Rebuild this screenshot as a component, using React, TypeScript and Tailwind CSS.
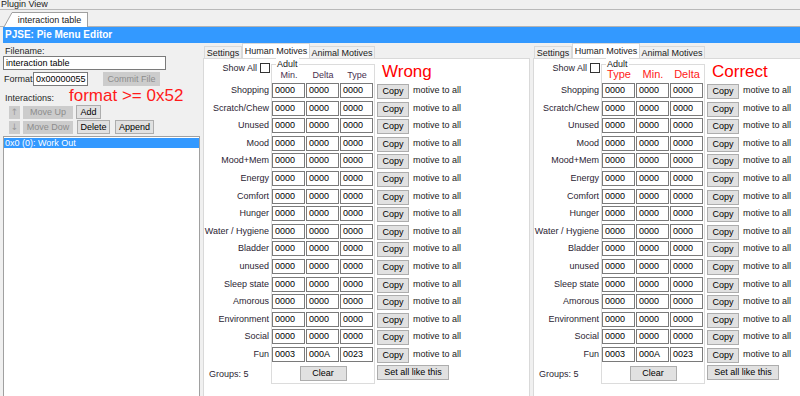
import React from "react";

type Motive = { label: string; vals: string[] };

const labels = [
  "Shopping",
  "Scratch/Chew",
  "Unused",
  "Mood",
  "Mood+Mem",
  "Energy",
  "Comfort",
  "Hunger",
  "Water / Hygiene",
  "Bladder",
  "unused",
  "Sleep state",
  "Amorous",
  "Environment",
  "Social",
];

const motives: Motive[] = [
  ...labels.map((l) => ({ label: l, vals: ["0000", "0000", "0000"] })),
  { label: "Fun", vals: ["0003", "000A", "0023"] },
];

function Btn({
  children,
  className = "",
}: {
  children: React.ReactNode;
  className?: string;
}) {
  return (
    <button
      className={`flex items-center justify-center bg-[#e1e1e1] border border-[#adadad] text-black leading-none ${className}`}
    >
      {children}
    </button>
  );
}

function Disabled({
  children,
  className = "",
}: {
  children: React.ReactNode;
  className?: string;
}) {
  return (
    <div
      className={`flex items-center justify-center bg-[#cccccc] text-[#8d8d8d] leading-none ${className}`}
    >
      {children}
    </div>
  );
}

function MotivePanel({
  headers,
  correct,
}: {
  headers: string[];
  correct?: boolean;
}) {
  return (
    <div className="flex flex-col w-[327px] shrink-0">
      {/* tabs */}
      <div className="flex items-end h-[15px] pl-[1px] text-[#1a1a1a]">
        <div className="w-[38px] h-[12px] flex items-center justify-center bg-[#f0f0f0] border border-b-0 border-[#d9d9d9]">
          Settings
        </div>
        <div className="w-[68px] h-[15px] flex items-center justify-center bg-white border border-b-0 border-[#d9d9d9]">
          Human Motives
        </div>
        <div className="w-[65px] h-[12px] flex items-center justify-center bg-[#f0f0f0] border border-b-0 border-l-0 border-[#d9d9d9]">
          Animal Motives
        </div>
      </div>

      <div className="flex-1 flex bg-white border border-[#d9d9d9]">
        {/* labels */}
        <div className="w-[67px] flex flex-col items-end text-[#2b2433]">
          <div className="h-[14px] mt-[2px] flex items-center gap-[3px]">
            <span>Show All</span>
            <div className="w-[10px] h-[10px] border border-[#333] bg-white mr-[1px]" />
          </div>
          <div className="h-[8px]" />
          {motives.map((m) => (
            <div key={m.label} className="h-[17.6px] leading-[15px] pr-[2px]">
              {m.label}
            </div>
          ))}
          <div className="self-start pl-[5px] pt-[4px]">Groups: 5</div>
        </div>

        {/* group box */}
        <div className="pt-[5px]">
          <div className="relative w-[104px] border border-[#dcdcdc] px-0">
            <span className="absolute -top-[7px] left-[4px] bg-white px-[1px] text-[#1a1a1a] leading-[12px]">
              Adult
            </span>
            <div className="flex h-[18px] items-end pb-[3px]">
              {headers.map((h) => (
                <div
                  key={h}
                  className={
                    correct
                      ? "w-[34px] text-center text-[11px] leading-[11px] text-[#ff2020]"
                      : "w-[34px] text-center text-[#4a3050] leading-[10px]"
                  }
                >
                  {h}
                </div>
              ))}
            </div>
            {motives.map((m) => (
              <div key={m.label} className="h-[17.6px] flex gap-[1px]">
                {m.vals.map((v, i) => (
                  <div
                    key={i}
                    className="w-[33px] h-[15px] bg-white border border-[#7a7a7a] pl-[2px] leading-[13px] text-black"
                  >
                    {v}
                  </div>
                ))}
              </div>
            ))}
            <div className="flex justify-center pt-[1.5px] pb-[2px]">
              <Btn className="w-[47px] h-[15px]">Clear</Btn>
            </div>
          </div>
        </div>

        {/* copy column */}
        <div className="flex flex-col pl-[2px]">
          <div className="h-[24px] flex items-center pl-[5px] text-[17px] leading-none text-[#ff0000]">
            {correct ? "Correct" : "Wrong"}
          </div>
          {motives.map((m) => (
            <div key={m.label} className="h-[17.6px] flex items-start">
              <Btn className="w-[32px] h-[15px] mt-[1px]">Copy</Btn>
              <span className="ml-[4px] leading-[14px] text-[#1a1a1a] whitespace-nowrap">
                motive to all
              </span>
            </div>
          ))}
          <Btn className="w-[72px] h-[15px] mt-[0.5px]">Set all like this</Btn>
        </div>
      </div>
    </div>
  );
}

export default function App() {
  return (
    <div className="w-[800px] h-[396px] overflow-hidden bg-[#f0f0f0] text-[9px] leading-[10px] text-black font-['Liberation_Sans',Arial,sans-serif]">
      {/* plugin view title */}
      <div className="h-[10px] flex items-center pl-[1px] border-b border-[#b9b9b9] text-[#222] leading-none">
        Plugin View
      </div>

      {/* document tab */}
      <div className="h-[17px] flex items-end pl-[4px] border-b border-[#b4b4b4]">
        <svg width="8" height="15" viewBox="0 0 8 15" className="mb-[-1px]">
          <polygon points="0,15 8,0 8,15" fill="#ffffff" />
          <line x1="0" y1="15" x2="8" y2="0.5" stroke="#a0a0a0" strokeWidth="1" />
        </svg>
        <div className="h-[15px] w-[76px] mb-[-1px] bg-white border-t border-r border-[#a0a0a0] flex items-center justify-center text-[#222]">
          interaction table
        </div>
      </div>

      {/* editor header */}
      <div className="ml-[3px] h-[16px] bg-[#3399ff] flex items-center pl-[2px] text-white font-bold text-[10px]">
        PJSE: Pie Menu Editor
      </div>

      <div className="ml-[3px] h-[360px] flex gap-[3px]">
        {/* left side */}
        <div className="w-[197px] shrink-0 flex flex-col text-[#1f1f1f]">
          <div className="h-[13px] pt-[4px] pl-[2px] leading-[9px]">Filename:</div>
          <div className="h-[14px] w-[163px] bg-white border border-[#7a7a7a] pl-[2px] leading-[12px] text-black">
            interaction table
          </div>
          <div className="h-[16px] flex items-center mt-[1px]">
            <span className="w-[30px] pl-[1px]">Format</span>
            <div className="w-[55px] h-[14px] bg-white border border-[#7a7a7a] pl-[2px] leading-[12px] text-black">
              0x00000055
            </div>
            <Disabled className="ml-[15px] w-[57px] h-[14px]">Commit File</Disabled>
          </div>
          <div className="h-[17px] flex items-end">
            <span className="pl-[2px] pb-[1px] leading-[10px]">Interactions:</span>
            <span className="ml-[15px] text-[17px] leading-[17px] text-[#ff1a1a]">
              format &gt;= 0x52
            </span>
          </div>
          <div className="flex items-center gap-[3px] ml-[6px] mt-[1px] h-[14px]">
            <Disabled className="w-[11px] h-[13px] font-['DejaVu_Sans',sans-serif] text-[9px] text-[#9a9a9a]">
              ↑
            </Disabled>
            <Disabled className="w-[50px] h-[13px]">Move Up</Disabled>
            <Btn className="w-[25px] h-[14px]">Add</Btn>
          </div>
          <div className="flex items-center ml-[6px] mt-[1px] h-[14px]">
            <Disabled className="w-[11px] h-[13px] font-['DejaVu_Sans',sans-serif] text-[9px] text-[#9a9a9a]">
              ↓
            </Disabled>
            <Disabled className="ml-[3px] w-[50px] h-[13px]">Move Dow</Disabled>
            <Btn className="ml-[4px] w-[33px] h-[14px]">Delete</Btn>
            <Btn className="ml-[5px] w-[39px] h-[14px]">Append</Btn>
          </div>
          <div className="flex-1 mt-[2px] bg-white border border-[#a0a0a0] pt-[1px]">
            <div className="h-[10px] bg-[#3399ff] text-white pl-[1px] leading-[10px]">
              0x0 (0): Work Out
            </div>
          </div>
        </div>

        <MotivePanel headers={["Min.", "Delta", "Type"]} />
        <MotivePanel headers={["Type", "Min.", "Delta"]} correct />
      </div>
    </div>
  );
}
